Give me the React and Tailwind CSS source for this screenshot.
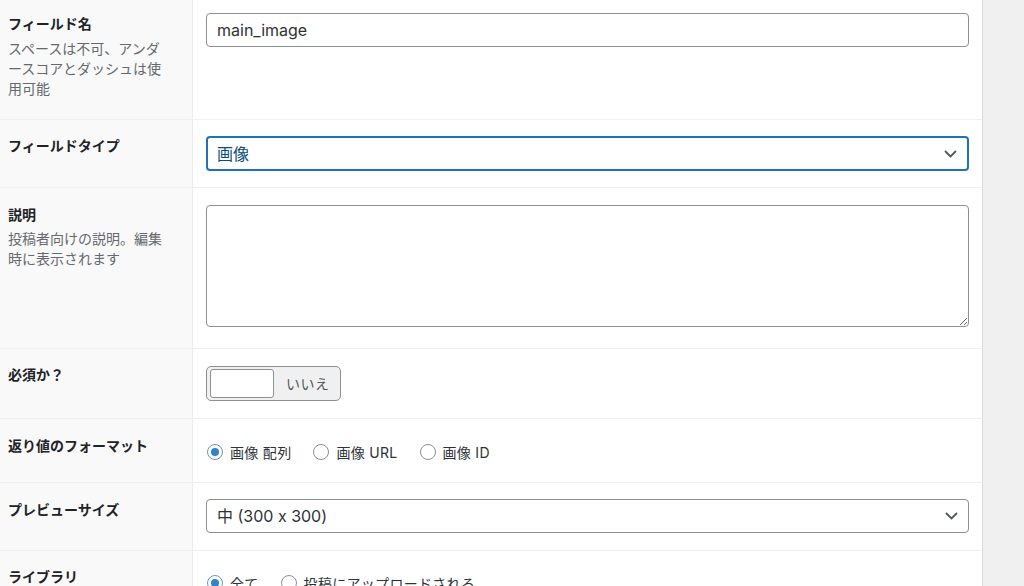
import React from "react";

const font = { fontFamily: 'Inter, "Noto Sans CJK JP", sans-serif' };

function Chevron() {
  return (
    <svg width="13" height="8" viewBox="0 0 13 8" className="absolute right-[10px] top-1/2 -translate-y-1/2">
      <polyline points="1,1 6.5,6.5 12,1" fill="none" stroke="#50575e" strokeWidth="1.8" />
    </svg>
  );
}

function Radio({ checked, label }) {
  return (
    <div className="flex items-center h-5">
      <span
        className={
          "w-4 h-4 rounded-full border bg-white flex items-center justify-center shrink-0 " +
          (checked ? "border-[#6f93c2]" : "border-[#8c8f94]")
        }
      >
        {checked && <span className="w-2 h-2 rounded-full bg-[#3582c4]" />}
      </span>
      <span className="ml-[7px] text-[14px] tracking-[0.3px] text-[#2c3338] whitespace-nowrap">{label}</span>
    </div>
  );
}

export default function App() {
  return (
    <div className="flex w-[1024px] h-[586px] overflow-hidden bg-[#f0f0f1]" style={font}>
      <div className="w-[983px] shrink-0 bg-white border-r border-[#dcdcde] flex flex-col">
        {/* Row 1 */}
        <div className="flex h-[120px] shrink-0 border-b border-[#f0f0f1]">
          <div className="w-[193px] shrink-0 bg-[#f9f9f9] border-r border-[#ececec] pl-2 pr-[24px] pt-[14px]">
            <div className="text-[14px] leading-[20px] font-bold text-[#1d2327]">フィールド名</div>
            <div className="text-[14px] leading-[20px] text-[#646970] mt-[5px]">スペースは不可、アンダースコアとダッシュは使用可能</div>
          </div>
          <div className="flex-1 pl-[13px] pr-[13px] pt-[13px]">
            <div className="h-[34px] border border-[#8c8f94] rounded-[4px] flex items-center px-[10px] text-[16px] text-[#2c3338]">
              main_image
            </div>
          </div>
        </div>

        {/* Row 2 */}
        <div className="flex h-[68px] shrink-0 border-b border-[#f0f0f1]">
          <div className="w-[193px] shrink-0 bg-[#f9f9f9] border-r border-[#ececec] pl-2 pt-[16px]">
            <div className="text-[14px] leading-[20px] font-bold text-[#1d2327]">フィールドタイプ</div>
          </div>
          <div className="flex-1 pl-[13px] pr-[13px] pt-[16px]">
            <div className="relative h-[35px] border-2 border-[#2271b1] rounded-[4px] flex items-center px-[9px] text-[16px] text-[#0a4b78]">
              画像
              <Chevron />
            </div>
          </div>
        </div>

        {/* Row 3 */}
        <div className="flex h-[161px] shrink-0 border-b border-[#f0f0f1]">
          <div className="w-[193px] shrink-0 bg-[#f9f9f9] border-r border-[#ececec] pl-2 pr-[24px] pt-[17px]">
            <div className="text-[14px] leading-[20px] font-bold text-[#1d2327]">説明</div>
            <div className="text-[14px] leading-[20px] text-[#646970] mt-[4px]">投稿者向けの説明。編集時に表示されます</div>
          </div>
          <div className="flex-1 pl-[13px] pr-[13px] pt-[17px]">
            <textarea
              readOnly
              className="block w-full h-[122px] border border-[#8c8f94] rounded-[4px] resize-y outline-none"
            />
          </div>
        </div>

        {/* Row 4 */}
        <div className="flex h-[70px] shrink-0 border-b border-[#f0f0f1]">
          <div className="w-[193px] shrink-0 bg-[#f9f9f9] border-r border-[#ececec] pl-2 pt-[16px]">
            <div className="text-[14px] leading-[20px] font-bold text-[#1d2327]">必須か？</div>
          </div>
          <div className="flex-1 pl-[13px] pt-[17px]">
            <div className="w-[135px] h-[35px] border border-[#8c8f94] rounded-[5px] bg-[#f0f0f1] flex items-center pl-[3px]">
              <div className="w-[64px] h-[29px] bg-white border border-[#8c8f94] rounded-[3px]" />
              <div className="ml-[12px] text-[14px] tracking-[0.5px] text-[#50575e]">いいえ</div>
            </div>
          </div>
        </div>

        {/* Row 5 */}
        <div className="flex h-[64px] shrink-0 border-b border-[#f0f0f1]">
          <div className="w-[193px] shrink-0 bg-[#f9f9f9] border-r border-[#ececec] pl-2 pt-[17px]">
            <div className="text-[14px] leading-[20px] font-bold text-[#1d2327]">返り値のフォーマット</div>
          </div>
          <div className="flex-1 pl-[14px] pt-[23px] flex gap-[22px] items-start">
            <Radio checked label="画像 配列" />
            <Radio label="画像 URL" />
            <Radio label="画像 ID" />
          </div>
        </div>

        {/* Row 6 */}
        <div className="flex h-[68px] shrink-0 border-b border-[#f0f0f1]">
          <div className="w-[193px] shrink-0 bg-[#f9f9f9] border-r border-[#ececec] pl-2 pt-[17px]">
            <div className="text-[14px] leading-[20px] font-bold text-[#1d2327]">プレビューサイズ</div>
          </div>
          <div className="flex-1 pl-[13px] pr-[13px] pt-[16px]">
            <div className="relative h-[34px] border border-[#8c8f94] rounded-[4px] flex items-center px-[10px] text-[16px] text-[#2c3338]">
              中 (300 x 300)
              <Chevron />
            </div>
          </div>
        </div>

        {/* Row 7 */}
        <div className="flex flex-1">
          <div className="w-[193px] shrink-0 bg-[#f9f9f9] border-r border-[#ececec] pl-2 pt-[16px]">
            <div className="text-[14px] leading-[20px] font-bold text-[#1d2327]">ライブラリ</div>
          </div>
          <div className="flex-1 pl-[14px] pt-[22px] flex gap-[22px] items-start">
            <Radio checked label="全て" />
            <Radio label="投稿にアップロードされる" />
          </div>
        </div>
      </div>
    </div>
  );
}
